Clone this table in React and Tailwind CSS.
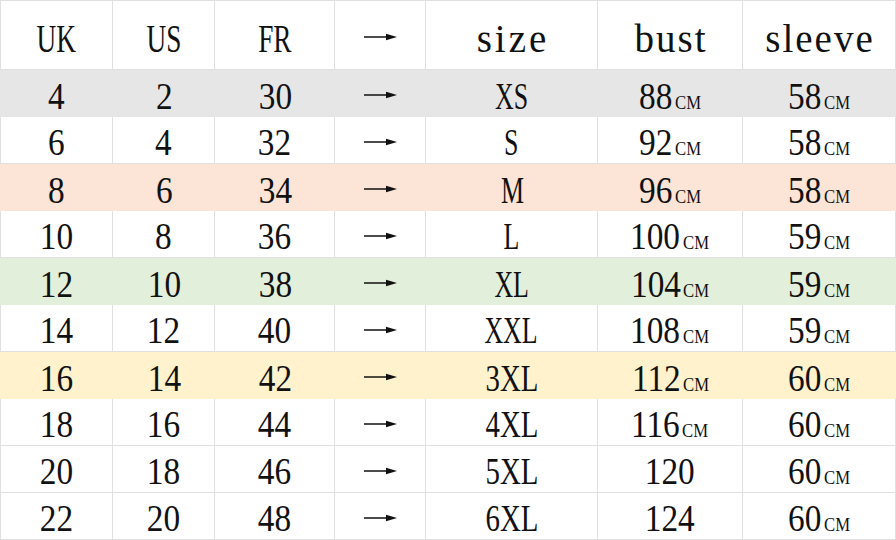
const rows = [
  ['4', '2', '30', 'XS', '88', '58', 'bg-[#e7e6e6]'],
  ['6', '4', '32', 'S', '92', '58', ''],
  ['8', '6', '34', 'M', '96', '58', 'bg-[#fce4d6]'],
  ['10', '8', '36', 'L', '100', '59', ''],
  ['12', '10', '38', 'XL', '104', '59', 'bg-[#e2efda]'],
  ['14', '12', '40', 'XXL', '108', '59', ''],
  ['16', '14', '42', '3XL', '112', '60', 'bg-[#fff2cc]'],
  ['18', '16', '44', '4XL', '116', '60', ''],
  ['20', '18', '46', '5XL', '120', '60', ''],
  ['22', '20', '48', '6XL', '124', '60', ''],
]

function Arrow() {
  return (
    <svg width="33" height="10" viewBox="0 0 33 10" className="block">
      <line x1="0" y1="5" x2="24" y2="5" stroke="#111" strokeWidth="1.5" />
      <path d="M22 1.8 L33 5 L22 8.2 Z" fill="#111" />
    </svg>
  )
}

function Num({ v }) {
  return <span className="inline-block scale-x-[0.9]">{v}</span>
}

function Letters({ v }) {
  const mixed = /\d/.test(v)
  return <span className={'inline-block ' + (mixed ? 'scale-x-[0.78]' : 'scale-x-[0.7]')}>{v}</span>
}

function Cm({ v, cm = true }) {
  if (!cm) return <Num v={v} />
  return (
    <span className="inline-flex items-baseline">
      <span className={'inline-block scale-x-[0.9] origin-left ' + (v.length === 3 ? '-mr-[6px]' : '-mr-[4px]')}>{v}</span>
      <span className="inline-block ml-[3px] text-[19px] scale-x-[0.88] origin-left -mr-[3px]">CM</span>
    </span>
  )
}

function Cell({ children, bg, first, header }) {
  const lines = bg ? bg : 'border-r border-b border-[#e0e0e0] ' + (first ? 'border-l ' : '') + (header ? 'border-t ' : '')
  return (
    <div className={'flex items-center justify-center ' + (header ? 'pt-[6px] text-[39px] ' : 'pt-[5px] ') + lines}>
      {children}
    </div>
  )
}

export default function App() {
  return (
    <div className="w-[896px] h-[540px] bg-white text-[#111] text-[37px] leading-none overflow-hidden font-['Liberation_Serif','Times_New_Roman',serif]">
      <div className="grid grid-cols-[113px_102px_120px_91px_172px_145px_153px] grid-rows-[70px_repeat(10,47px)]">
        <Cell first header><Letters v="UK" /></Cell>
        <Cell header><Letters v="US" /></Cell>
        <Cell header><Letters v="FR" /></Cell>
        <Cell header><span className="-mt-[2px]"><Arrow /></span></Cell>
        <Cell header><span className="tracking-[3px] ml-[3px] font-light">size</span></Cell>
        <Cell header><span className="tracking-[2px] ml-[2px]">bust</span></Cell>
        <Cell header><span className="tracking-[2px] ml-[2px]">sleeve</span></Cell>

        {rows.map(([uk, us, fr, size, bust, sleeve, bg]) => (
          <div key={uk} className="contents">
            <Cell bg={bg} first><Num v={uk} /></Cell>
            <Cell bg={bg}><Num v={us} /></Cell>
            <Cell bg={bg}><Num v={fr} /></Cell>
            <Cell bg={bg}><span className="-mt-[2px]"><Arrow /></span></Cell>
            <Cell bg={bg}><Letters v={size} /></Cell>
            <Cell bg={bg}><Cm v={bust} cm={bust !== '120' && bust !== '124'} /></Cell>
            <Cell bg={bg}><Cm v={sleeve} /></Cell>
          </div>
        ))}
      </div>
    </div>
  )
}
